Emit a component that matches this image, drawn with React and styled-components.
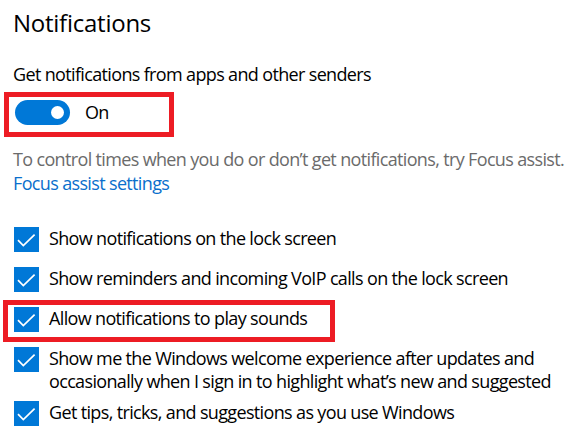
import React from 'react';
import styled, { createGlobalStyle } from 'styled-components';

const GlobalStyle = createGlobalStyle`
  html, body {
    margin: 0;
    padding: 0;
    background: #ffffff;
  }
  body {
    font-family: "Open Sans", "Noto Sans", sans-serif;
    color: #000;
  }
`;

const Page = styled.div`
  width: 585px;
  height: 442px;
  overflow: hidden;
  box-sizing: border-box;
  padding: 7px 0 0 13px;
  display: flex;
  flex-direction: column;
`;

const Title = styled.h2`
  margin: 0;
  font-size: 24px;
  font-weight: 400;
  line-height: 32px;
  letter-spacing: -0.25px;
`;

const Text = styled.div`
  font-size: 18px;
  line-height: ${({ $lh }) => $lh || 23}px;
  color: ${({ $muted }) => ($muted ? '#6b6b6b' : '#000')};
  letter-spacing: -0.65px;
  white-space: nowrap;
`;

const Link = styled.a`
  display: block;
  font-size: 18px;
  line-height: 24px;
  color: #0a6fcc;
  text-decoration: none;
  letter-spacing: -0.65px;
`;

// red annotation frame, negative margins keep the flow unchanged
const Highlight = styled.div`
  width: ${({ $w }) => $w}px;
  box-sizing: border-box;
  border: 5px solid #ed1c24;
  padding: ${({ $pad }) => $pad};
  margin: ${({ $m }) => $m};
`;

const ToggleRow = styled.div`
  display: flex;
  align-items: center;
  gap: 15px;
  height: 25px;
  margin-left: 1px;
`;

const Switch = styled.div`
  width: 55px;
  height: 25px;
  border-radius: 13px;
  background: #0078d7;
  display: flex;
  align-items: center;
  justify-content: flex-end;
  padding-right: 6px;
  box-sizing: border-box;
`;

const Knob = styled.div`
  width: 13px;
  height: 13px;
  border-radius: 50%;
  background: #fff;
`;

const List = styled.div`
  display: flex;
  flex-direction: column;
  margin-top: 32px;
  margin-left: 1px;
`;

const Row = styled.div`
  display: flex;
  align-items: flex-start;
  gap: 10px;
  min-height: ${({ $h }) => $h || 32}px;
  margin-bottom: ${({ $mb }) => ($mb === undefined ? 8 : $mb)}px;
`;

const Box = styled.div`
  flex: none;
  width: 25px;
  height: 25px;
  background: #0078d7;
  display: flex;
  align-items: center;
  justify-content: center;
`;

const Check = () => (
  <Box>
    <svg width="25" height="25" viewBox="0 0 25 25">
      <path d="M4 13.2 L9.3 18.6 L20.6 7.6" fill="none" stroke="#fff" strokeWidth="1.7" />
    </svg>
  </Box>
);

const items = [
  ['Show notifications on the lock screen'],
  ['Show reminders and incoming VoIP calls on the lock screen'],
  ['Allow notifications to play sounds'],
  [
    'Show me the Windows welcome experience after updates and',
    'occasionally when I sign in to highlight what’s new and suggested',
  ],
  ['Get tips, tricks, and suggestions as you use Windows'],
];

const Item = ({ lines, h, mb }) => (
  <Row $h={h} $mb={mb}>
    <Check />
    <div>
      {lines.map((l) => (
        <Text key={l}>{l}</Text>
      ))}
    </div>
  </Row>
);

const App = () => (
  <>
    <GlobalStyle />
    <Page>
      <Title>Notifications</Title>
      <Text style={{ marginTop: 24 }}>Get notifications from apps and other senders</Text>
      <Highlight $w={170} $pad="3px 0 7px 5px" $m="6px 0 -15px -9px">
        <ToggleRow>
          <Switch>
            <Knob />
          </Switch>
          <Text>On</Text>
        </ToggleRow>
      </Highlight>
      <Text $muted $lh={24} style={{ marginTop: 25 }}>
        To control times when you do or don’t get notifications, try Focus assist.
      </Text>
      <Link href="#">Focus assist settings</Link>
      <List>
        {items.map((lines, i) =>
          i === 2 ? (
            <Highlight key={i} $w={332} $pad="2px 0 0 6px" $m="-7px 0 5px -11px">
              <Item lines={lines} h={30} mb={0} />
            </Highlight>
          ) : (
            <Item key={i} lines={lines} />
          )
        )}
      </List>
    </Page>
  </>
);

export default App;
